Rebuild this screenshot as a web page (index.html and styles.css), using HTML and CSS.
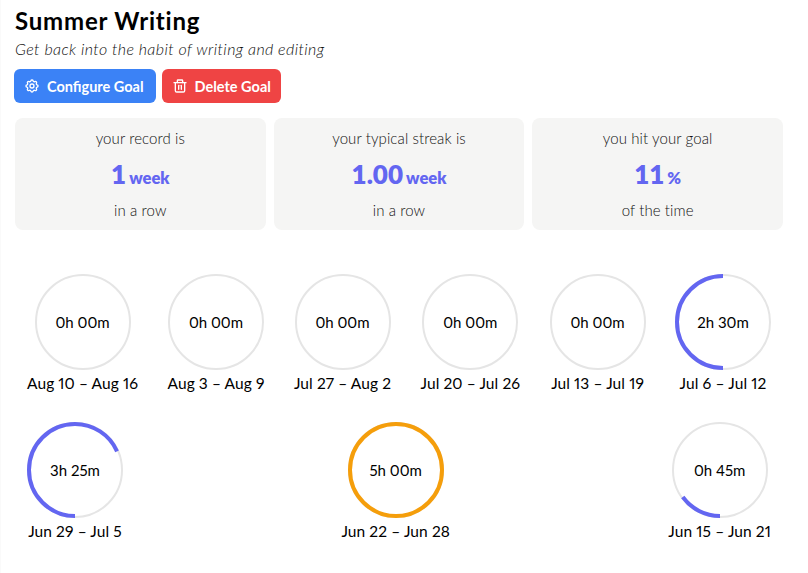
FILE: index.html
```html
<!DOCTYPE html>
<html lang="en">
<head>
    <meta charset="UTF-8">
    <meta name="viewport" content="width=device-width, initial-scale=1.0">
    <title>Summer Writing</title>
    <link rel="stylesheet" href="styles.css">
</head>
<body>
    <h1 class="title">Summer Writing</h1>
    <p class="subtitle">Get back into the habit of writing and editing</p>

    <!-- Goal actions -->
    <div class="actions">
        <button class="btn btn-blue">
            <svg class="btn-icon" viewBox="0 0 24 24" fill="none" stroke="currentColor" stroke-width="2" stroke-linecap="round" stroke-linejoin="round">
                <path d="M10.3 4.3c.4-1.8 3-1.8 3.4 0a1.7 1.7 0 0 0 2.6 1.1c1.5-.9 3.3.8 2.4 2.4a1.7 1.7 0 0 0 1 2.5c1.8.4 1.8 3 0 3.4a1.7 1.7 0 0 0-1 2.6c.9 1.5-.9 3.3-2.4 2.4a1.7 1.7 0 0 0-2.6 1c-.4 1.8-3 1.8-3.4 0a1.7 1.7 0 0 0-2.6-1c-1.5.9-3.3-.9-2.4-2.4a1.7 1.7 0 0 0-1-2.6c-1.8-.4-1.8-3 0-3.4a1.7 1.7 0 0 0 1-2.5c-.9-1.6.9-3.3 2.4-2.4 1 .6 2.3.1 2.6-1.1z"/>
                <circle cx="12" cy="12" r="3"/>
            </svg>
            Configure Goal
        </button>
        <button class="btn btn-red">
            <svg class="btn-icon" viewBox="0 0 24 24" fill="none" stroke="currentColor" stroke-width="2" stroke-linecap="round" stroke-linejoin="round">
                <path d="M3 7h18"/>
                <path d="M10 11v6"/>
                <path d="M14 11v6"/>
                <path d="M5 7v12a2 2 0 0 0 2 2h10a2 2 0 0 0 2-2V7"/>
                <path d="M8 7V4a1 1 0 0 1 1-1h6a1 1 0 0 1 1 1v3"/>
            </svg>
            Delete Goal
        </button>
    </div>

    <!-- Stats -->
    <div class="stats">
        <div class="stat">
            <p class="stat-text">your record is</p>
            <p class="stat-value">1 <span class="stat-unit">week</span></p>
            <p class="stat-text">in a row</p>
        </div>
        <div class="stat">
            <p class="stat-text">your typical streak is</p>
            <p class="stat-value">1.00 <span class="stat-unit">week</span></p>
            <p class="stat-text">in a row</p>
        </div>
        <div class="stat">
            <p class="stat-text">you hit your goal</p>
            <p class="stat-value">11 <span class="stat-unit">%</span></p>
            <p class="stat-text">of the time</p>
        </div>
    </div>

    <!-- Weeks, filled in by weeks.js -->
    <div class="weeks" id="weeks"></div>

    <script src="weeks.js"></script>
</body>
</html>
```

FILE: styles.css
```css
body {
    font-family: "Lato", "Liberation Sans", sans-serif;
    margin: 0;
    padding: 7px 25px 0 14px;
    min-height: 100vh;
    box-sizing: border-box;
    border-left: 1px solid #fafafa;
    background-color: #fff;
    color: #000;
}
p {
    margin: 0;
}
.title {
    margin: 0;
    font-size: 24px;
    line-height: 28px;
    font-weight: 700;
    letter-spacing: 0.8px;
}
.subtitle {
    margin-top: 3px;
    font-size: 16px;
    line-height: 22px;
    font-weight: 300;
    font-style: italic;
    letter-spacing: 0.4px;
    color: #111;
}
.actions {
    display: flex;
    gap: 6px;
    margin: 9px 0 15px -1px;
}
.btn {
    display: flex;
    align-items: center;
    gap: 7px;
    height: 34px;
    border: none;
    border-radius: 6px;
    font-family: inherit;
    font-size: 14.5px;
    font-weight: 700;
    color: #fff;
}
.btn-blue {
    padding: 0 12px 0 10px;
    background-color: #3b82f6;
}
.btn-red {
    padding: 0 10px;
    background-color: #ef4444;
}
.btn-icon {
    width: 16px;
    height: 16px;
}
.stats {
    display: grid;
    grid-template-columns: repeat(3, 1fr);
    gap: 8px;
}
.stat {
    background-color: #f5f5f4;
    border-radius: 8px;
    padding: 9px 0 0;
    height: 112px;
    box-sizing: border-box;
    text-align: center;
}
.stat-text {
    font-size: 15px;
    line-height: 22px;
    font-weight: 300;
    letter-spacing: 0.1px;
    color: #111;
}
.stat-value {
    margin: 9px 0;
    font-size: 26px;
    line-height: 32px;
    font-weight: 800;
    word-spacing: -3px;
    color: #6366f1;
}
.stat-unit {
    font-size: 16.5px;
    line-height: 1;
}
.weeks {
    display: flex;
    flex-wrap: wrap;
    justify-content: space-between;
    gap: 29px 28px;
    margin-top: 44px;
    padding: 0 12px;
}
.week {
    display: flex;
    flex-direction: column;
    align-items: center;
    gap: 3px;
    width: min-content;
}
.week-ring {
    display: grid;
    place-items: center;
    width: 96px;
    height: 96px;
}
.week-ring svg, .week-time {
    grid-area: 1 / 1;
}
.week-ring svg {
    width: 96px;
    height: 96px;
}
.week-time {
    font-size: 15px;
    font-variant-numeric: proportional-nums;
}
.week-date {
    font-size: 15.5px;
    line-height: 20px;
    letter-spacing: 0.1px;
    font-variant-numeric: proportional-nums;
    white-space: nowrap;
}
.track {
    fill: none;
    stroke: #e5e5e5;
    stroke-width: 2;
}
.progress {
    fill: none;
    stroke: #6366f1;
    stroke-width: 4;
}
.progress-done {
    stroke: #f59e0b;
}
```

FILE: weeks.js
```js
const goalMinutes = 300;

const weeks = [
    { date: 'Aug 10 – Aug 16', minutes: 0 },
    { date: 'Aug 3 – Aug 9', minutes: 0 },
    { date: 'Jul 27 – Aug 2', minutes: 0 },
    { date: 'Jul 20 – Jul 26', minutes: 0 },
    { date: 'Jul 13 – Jul 19', minutes: 0 },
    { date: 'Jul 6 – Jul 12', minutes: 150 },
    { date: 'Jun 29 – Jul 5', minutes: 205 },
    { date: 'Jun 22 – Jun 28', minutes: 300 },
    { date: 'Jun 15 – Jun 21', minutes: 45 }
];

function formatTime(minutes) {
    const mins = String(minutes % 60).padStart(2, '0');
    return `${Math.floor(minutes / 60)}h ${mins}m`;
}

const weeksDiv = document.getElementById('weeks');

weeks.forEach(week => {
    const percent = Math.min(week.minutes / goalMinutes * 100, 100);
    const doneClass = percent === 100 ? ' progress-done' : '';
    const weekItem = document.createElement('div');
    weekItem.classList.add('week');
    // the arc starts at the bottom of the ring and runs clockwise
    weekItem.innerHTML = `
        <div class="week-ring">
            <svg viewBox="0 0 96 96">
                <circle class="track" cx="48" cy="48" r="47"></circle>
                <circle class="progress${doneClass}" cx="48" cy="48" r="46" pathLength="100"
                    stroke-dasharray="${percent} 100" transform="rotate(90 48 48)"></circle>
            </svg>
            <span class="week-time">${formatTime(week.minutes)}</span>
        </div>
        <span class="week-date">${week.date}</span>
    `;
    weeksDiv.appendChild(weekItem);
});
```
